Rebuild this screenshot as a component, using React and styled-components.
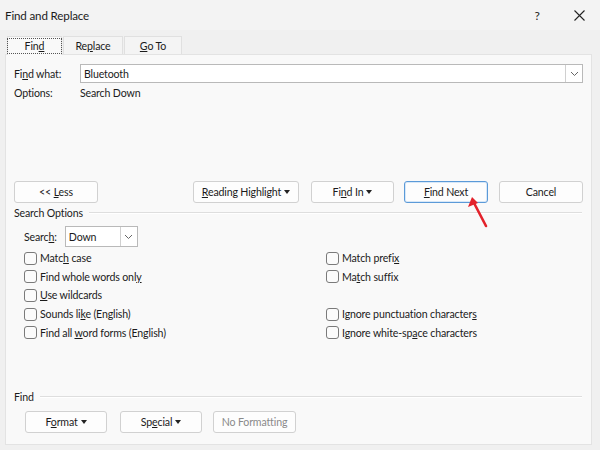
import {createGlobalStyle, styled} from 'styled-components';
import {Fragment} from 'react';

const GlobalStyle = createGlobalStyle`
    html, body {
        margin: 0;
        padding: 0;
        background: #efefef;
    }
    body {
        font-family: Lato, "Noto Sans", sans-serif;
        font-size: 10.6px;
        letter-spacing: -0.15px;
        color: #1b1b1b;
    }
`;

const Window = styled.div`
    position: relative;
    width: 600px;
    height: 450px;
    background: #f0f0f0;
    display: flex;
    flex-direction: column;
    overflow: hidden;
`;

const TitleBar = styled.div`
    height: 30px;
    display: flex;
    align-items: center;
    padding-left: 5px;
    font-size: 11.6px;
    background: #f3f3f3;
`;

const TitleText = styled.div`
    flex: 1;
`;

const TitleIcon = styled.div`
    width: 42px;
    display: flex;
    justify-content: center;
    align-items: center;
    font-size: 12px;
    color: #222;
`;

const TabStrip = styled.div`
    display: flex;
    align-items: flex-end;
    height: 24px;
    padding-left: 7px;
    gap: 1px;
`;

const Tab = styled.div`
    height: ${({$active}) => ($active ? '19px' : '18px')};
    width: ${({$width}) => $width}px;
    box-sizing: border-box;
    display: flex;
    align-items: center;
    justify-content: center;
    background: ${({$active}) => ($active ? '#f9f9f9' : '#f4f4f4')};
    border: 1px solid #e0e0e0;
    border-bottom: none;
    position: relative;
    z-index: ${({$active}) => ($active ? 1 : 0)};
    margin-bottom: ${({$active}) => ($active ? '-1px' : '0')};
`;

const FocusBox = styled.span`
    border: 1px dotted #555;
    padding: 0 17px;
    line-height: 14px;
`;

const Panel = styled.div`
    flex: 1;
    margin: 0 8px 5px 5px;
    background: #f9f9f9;
    border: 1px solid #e3e3e3;
    padding: 9px 8px 0 8px;
    display: flex;
    flex-direction: column;
`;

const Row = styled.div`
    display: flex;
    align-items: center;
    height: ${({$h}) => $h || 19}px;
    margin-top: ${({$mt}) => $mt || 0}px;
    padding-left: ${({$indent}) => $indent || 0}px;
    gap: ${({$gap}) => $gap || 0}px;
`;

const Label = styled.div`
    width: ${({$w}) => $w}px;
    flex-shrink: 0;
`;

const TextBox = styled.div`
    flex: 1;
    height: 19px;
    box-sizing: border-box;
    background: #fff;
    border: 1px solid #b9b9b9;
    display: flex;
    align-items: center;
    padding-left: 3px;
`;

const ComboValue = styled.div`
    flex: 1;
`;

const ComboArrow = styled.div`
    width: 16px;
    height: 100%;
    border-left: 1px solid #d0d0d0;
    display: flex;
    align-items: center;
    justify-content: center;
`;

const Select = styled(TextBox)`
    flex: none;
    width: ${({$w}) => $w}px;
    height: 21px;
`;

const Button = styled.div`
    width: ${({$w}) => $w || 83}px;
    height: 22px;
    box-sizing: border-box;
    background: #fdfdfd;
    border: 1px solid ${({$default}) => ($default ? '#5b9ad8' : '#d1d1d1')};
    box-shadow: ${({$default}) => ($default ? 'inset 0 0 0 1px #d8e8f8' : 'none')};
    border-radius: 3px;
    display: flex;
    align-items: center;
    justify-content: center;
    gap: 3px;
    margin-left: ${({$ml}) => $ml || 0}px;
    color: ${({$disabled}) => ($disabled ? '#8a8a8a' : '#1b1b1b')};
    flex-shrink: 0;
`;

const Caret = styled.span`
    width: 0;
    height: 0;
    border-left: 3.5px solid transparent;
    border-right: 3.5px solid transparent;
    border-top: 4px solid #222;
`;

const GroupHeader = styled.div`
    display: flex;
    align-items: center;
    gap: 6px;
    height: 14px;
    margin-top: ${({$mt}) => $mt}px;
    margin-right: 1px;
    &::after {
        content: '';
        flex: 1;
        border-top: 1px solid #dedede;
        border-bottom: 1px solid #fff;
    }
`;

const OptionGrid = styled.div`
    display: grid;
    grid-template-columns: 302px 1fr;
    grid-auto-rows: 18.6px;
    padding-left: 10px;
    margin-top: 2px;
`;

const Check = styled.label`
    display: flex;
    align-items: center;
    gap: 3px;
`;

const Box = styled.span`
    width: 11px;
    height: 11px;
    border: 1px solid #7a7a7a;
    border-radius: 3px;
    background: #fbfbfb;
    flex-shrink: 0;
`;

const U = styled.span`
    text-decoration: underline;
    text-underline-offset: 1px;
`;

const Arrow = styled.svg`
    position: absolute;
    left: 464px;
    top: 192px;
`;

const Chevron = () => (
    <svg width="9" height="6" viewBox="0 0 9 6">
        <path d="M1 1 L4.5 4.5 L8 1" fill="none" stroke="#666" strokeWidth="1" />
    </svg>
);

const left = [
    <>Matc<U>h</U> case</>,
    <>Find whole words onl<U>y</U></>,
    <><U>U</U>se wildcards</>,
    <>Sounds li<U>k</U>e (English)</>,
    <>Find all <U>w</U>ord forms (English)</>,
];

const right = [
    <>Match prefi<U>x</U></>,
    <>Ma<U>t</U>ch suffix</>,
    null,
    <>Ignore punctuation character<U>s</U></>,
    <>Ignore white-sp<U>a</U>ce characters</>,
];

export default function App() {
    return (
        <Window>
            <GlobalStyle />
            <TitleBar>
                <TitleText>Find and Replace</TitleText>
                <TitleIcon>?</TitleIcon>
                <TitleIcon>
                    <svg width="11" height="11" viewBox="0 0 11 11">
                        <path d="M0.5 0.5 L10.5 10.5 M10.5 0.5 L0.5 10.5" stroke="#222" strokeWidth="1.1" />
                    </svg>
                </TitleIcon>
            </TitleBar>
            <TabStrip>
                <Tab $active $width={55}><FocusBox>Fin<U>d</U></FocusBox></Tab>
                <Tab $width={60}><span>Re<U>p</U>lace</span></Tab>
                <Tab $width={58}><span><U>G</U>o To</span></Tab>
            </TabStrip>
            <Panel>
                <Row>
                    <Label $w={66}>Fi<U>n</U>d what:</Label>
                    <TextBox>
                        <ComboValue>Bluetooth</ComboValue>
                        <ComboArrow><Chevron /></ComboArrow>
                    </TextBox>
                </Row>
                <Row $mt={2} $h={16}>
                    <Label $w={66}>Options:</Label>
                    <div>Search Down</div>
                </Row>
                <Row $mt={80} $h={22}>
                    <Button $w={84}><span>&lt;&lt; <U>L</U>ess</span></Button>
                    <Button $w={106} $ml={95}><span><U>R</U>eading Highlight</span><Caret /></Button>
                    <Button $w={83} $ml={12}><span>Fi<U>n</U>d In</span><Caret /></Button>
                    <Button $w={84} $ml={10} $default><span><U>F</U>ind Next</span></Button>
                    <Button $w={84} $ml={11}><span>Cancel</span></Button>
                </Row>
                <GroupHeader $mt={3}>Search Options</GroupHeader>
                <Row $mt={6} $h={21} $indent={10} $gap={8}>
                    <span>Searc<U>h</U>:</span>
                    <Select $w={73}>
                        <ComboValue>Down</ComboValue>
                        <ComboArrow><Chevron /></ComboArrow>
                    </Select>
                </Row>
                <OptionGrid>
                    {left.map((l, i) => (
                        <Fragment key={i}>
                            <Check><Box /><span>{l}</span></Check>
                            {right[i] ? <Check><Box /><span>{right[i]}</span></Check> : <div />}
                        </Fragment>
                    ))}
                </OptionGrid>
                <GroupHeader $mt={48}>Find</GroupHeader>
                <Row $mt={8} $h={21} $indent={11}>
                    <Button $w={82}><span>F<U>o</U>rmat</span><Caret /></Button>
                    <Button $w={82} $ml={13}><span>Sp<U>e</U>cial</span><Caret /></Button>
                    <Button $w={83} $ml={11} $disabled><span>No Formatting</span></Button>
                </Row>
            </Panel>
            <Arrow width="26" height="36" viewBox="0 0 26 36">
                <path d="M22 34 L10 11" stroke="#e3222b" strokeWidth="2.6" strokeLinecap="round" />
                <path d="M8 5 L4 15 L14 11 Z" fill="#e3222b" />
            </Arrow>
        </Window>
    );
}
